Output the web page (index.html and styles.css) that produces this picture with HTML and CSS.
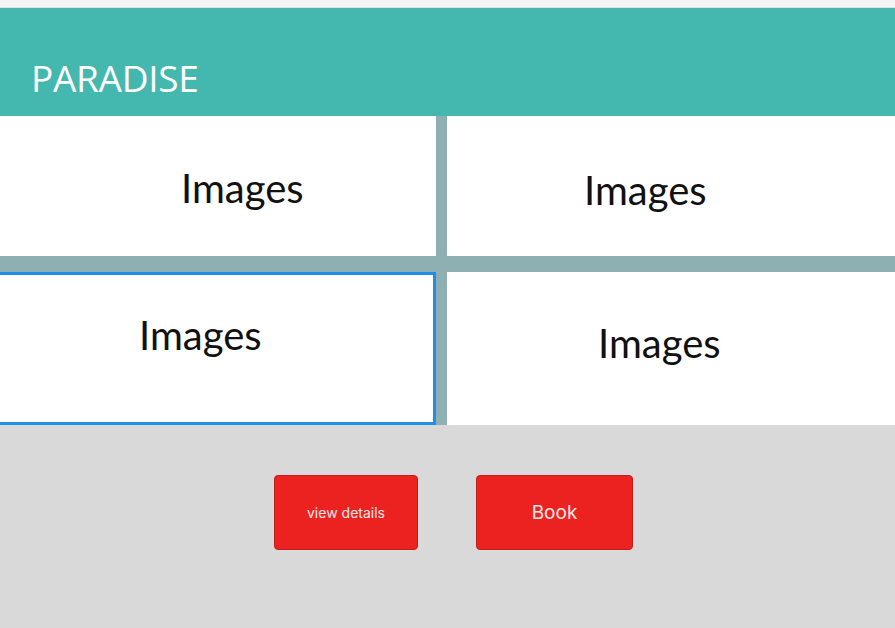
FILE: index.html
```html
<!DOCTYPE html>
<html>
<head>
<meta charset="utf-8">
<link rel="stylesheet" href="styles.css">
</head>
<body>
<div class="topstrip"></div>
<header class="header"><h1 class="brand">PARADISE</h1></header>
<section class="gallery">
  <div class="cell cell-a"><span class="label">Images</span></div>
  <div class="cell cell-b"><span class="label">Images</span></div>
  <div class="cell cell-c"><span class="label">Images</span></div>
  <div class="cell cell-d"><span class="label">Images</span></div>
</section>
<section class="actions">
  <button class="btn btn-small">view details</button>
  <button class="btn btn-large">Book</button>
</section>
</body>
</html>
```
FILE: styles.css
```css
html, body {
  margin: 0;
  padding: 0;
}
body {
  width: 895px;
  height: 628px;
  overflow: hidden;
  background: #d9d9d9;
  font-family: "Lato", "Open Sans", sans-serif;
}
.topstrip {
  height: 7px;
  background: #f4f4f4;
  border-bottom: 1px solid #e2e2e2;
}
.header {
  height: 108px;
  background: #44b8ae;
  box-sizing: border-box;
  padding: 50px 0 0 31px;
}
.brand {
  margin: 0;
  font-family: "Open Sans", sans-serif;
  font-weight: 400;
  font-size: 37px;
  line-height: 40px;
  color: #ffffff;
  letter-spacing: -0.3px;
}
.gallery {
  display: grid;
  grid-template-columns: 436px 1fr;
  grid-template-rows: 140px 153px;
  column-gap: 11px;
  row-gap: 16px;
  background: #8fb0b3;
}
.cell {
  background: #ffffff;
  box-sizing: border-box;
  display: flex;
  align-items: flex-start;
}
.label {
  font-size: 40px;
  line-height: 44px;
  color: #111111;
}
.cell-a { padding: 50px 0 0 181px; }
.cell-b { padding: 52px 0 0 137px; }
.cell-c {
  border: 3px solid #1e8ee9;
  border-left: none;
  padding: 38px 0 0 139px;
}
.cell-d { padding: 49px 0 0 151px; }
.actions {
  display: flex;
  align-items: flex-start;
  gap: 58px;
  padding: 50px 0 0 274px;
}
.btn {
  height: 75px;
  background: #ec2220;
  border: 1px solid #c41c1c;
  border-radius: 4px;
  color: #fbe8e8;
  font-family: "Inter", "Roboto", sans-serif;
  padding: 0;
  cursor: pointer;
}
.btn-small {
  width: 144px;
  font-size: 14px;
}
.btn-large {
  width: 157px;
  font-size: 19px;
}
```
